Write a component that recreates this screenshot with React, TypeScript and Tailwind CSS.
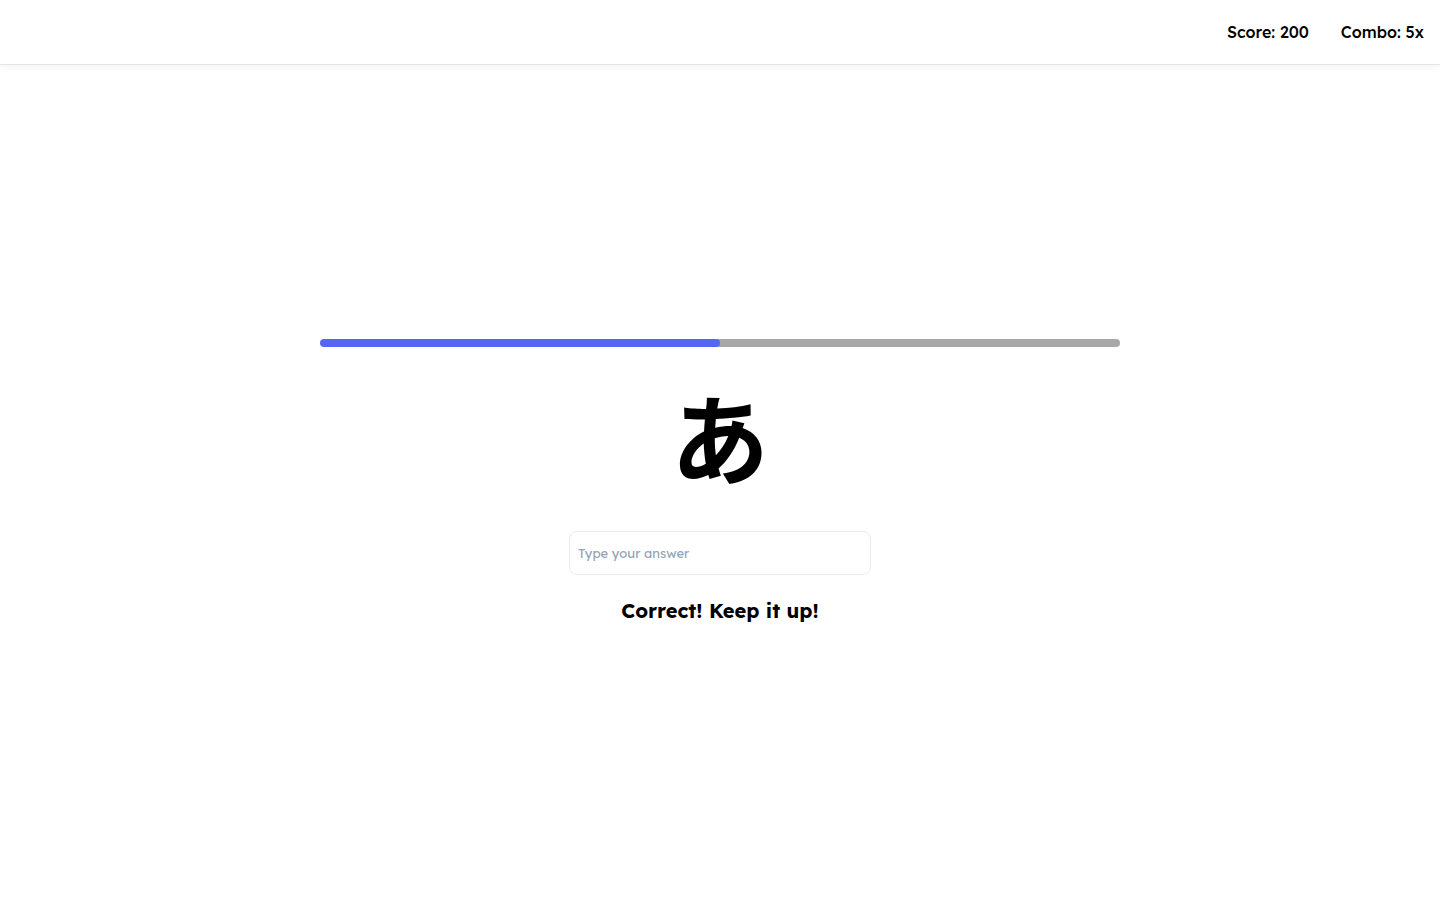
const fontStack =
  "font-['Lexend','Inter','Noto_Sans_CJK_JP',sans-serif]";

type StatProps = { label: string; value: string };

function Stat({ label, value }: StatProps) {
  return (
    <p>
      {label}: {value}
    </p>
  );
}

function ProgressBar({ value }: { value: number }) {
  return (
    <div
      role="progressbar"
      aria-label="Progress"
      aria-valuenow={value}
      aria-valuemin={0}
      aria-valuemax={100}
      className="h-2 w-full max-w-[800px] overflow-hidden rounded-full bg-[#a8a8a8]"
    >
      <div className="h-full rounded-full bg-[#5566f6]" style={{ width: `${value}%` }} />
    </div>
  );
}

export default function App() {
  return (
    <div className={`flex min-h-screen flex-col bg-white text-black ${fontStack}`}>
      <header className="flex h-[65px] items-center justify-end gap-8 border-b border-[#e4e4e7] px-4 text-base font-medium shadow-[0_2px_8px_rgba(0,0,0,0.05)]">
        <Stat label="Score" value="200" />
        <Stat label="Combo" value="5x" />
      </header>
      <main className="flex flex-1 flex-col items-center justify-center">
        <ProgressBar value={50} />
        <p lang="ja" className="mt-8 text-[98px] leading-[124px] font-bold">
          あ
        </p>
        <input
          type="text"
          aria-label="Your answer"
          placeholder="Type your answer"
          className="mt-7 h-11 w-[302px] rounded-lg border border-[#ebebeb] px-2 text-[13px] placeholder:text-[#94a3b8]"
        />
        <p className="mt-5 text-xl leading-8 font-bold">Correct! Keep it up!</p>
      </main>
    </div>
  );
}
